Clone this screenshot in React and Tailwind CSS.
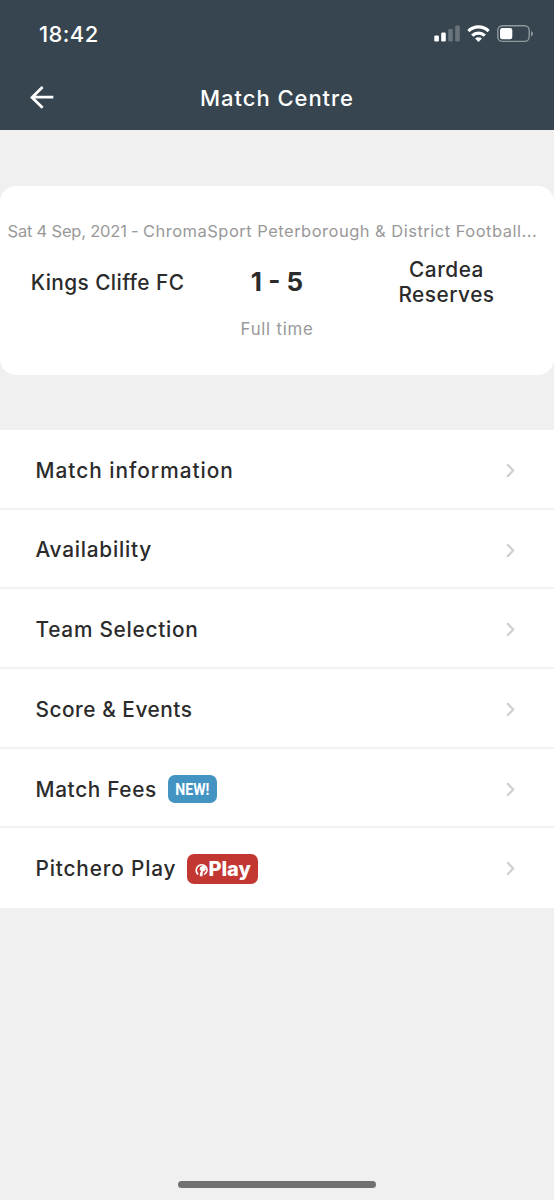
import clsx from 'clsx';

const MENU = [
    { label: 'Match information', tracking: 'tracking-[1px]' },
    { label: 'Availability', tracking: 'tracking-[0.76px]' },
    { label: 'Team Selection', tracking: 'tracking-[0.74px]' },
    { label: 'Score & Events', tracking: 'tracking-[0.54px]' },
    { label: 'Match Fees', tracking: 'tracking-[0.66px]', badge: 'new' },
    { label: 'Pitchero Play', tracking: 'tracking-[0.84px]', badge: 'play' },
];

const StatusBar = () => (
    <div className="flex h-[68px] items-center justify-between pl-[39px] pr-[20px]">
        <span className="text-[22px] font-medium leading-none tracking-[0.4px]">18:42</span>
        <div className="flex items-center">
            {/* Signal */}
            <svg width="27" height="18" viewBox="0 0 27 18" fill="#fff">
                <rect x="0.3" y="10.5" width="4.6" height="6" rx="1.2" />
                <rect x="7.2" y="7.5" width="4.6" height="9" rx="1.2" />
                <rect x="14.2" y="4" width="4.6" height="12.5" rx="1.2" opacity="0.25" />
                <rect x="21.2" y="0.5" width="4.6" height="16" rx="1.2" opacity="0.25" />
            </svg>
            {/* Wifi */}
            <svg className="ml-[6px]" width="23" height="18" viewBox="0 0 23 18" fill="none" stroke="#fff" strokeWidth="3.2">
                <path d="M1.4 6.1a14.3 14.3 0 0 1 20.2 0" />
                <path d="M5.2 10.6a9 9 0 0 1 12.6 0" />
                <path d="M11.5 17l-3.4-3.4a4.8 4.8 0 0 1 6.8 0z" fill="#fff" stroke="none" />
            </svg>
            {/* Battery */}
            <svg className="ml-[7px]" width="37" height="18" viewBox="0 0 37 18" fill="none">
                <rect x="0.8" y="0.8" width="31.4" height="15.6" rx="4.5" stroke="#fff" strokeOpacity="0.45" strokeWidth="1.4" />
                <rect x="3" y="3" width="12.3" height="11.3" rx="2.3" fill="#fff" />
                <path d="M34.2 6v5.4c1-.5 1.7-1.5 1.7-2.7s-.7-2.2-1.7-2.7z" fill="#fff" fillOpacity="0.5" />
            </svg>
        </div>
    </div>
);

const Header = () => (
    <header className="h-[130px] bg-[#36454f] text-white">
        <StatusBar />
        <div className="grid h-[60px] grid-cols-[80px_1fr_80px] items-center">
            <button className="pl-[29px]">
                <svg width="26" height="24" viewBox="0 0 26 24" fill="none" stroke="#fff" strokeWidth="2.8">
                    <path d="M24.3 11.2H3M13.6 1L3 11.4l10.6 10.4" />
                </svg>
            </button>
            <h1 className="text-center text-[22px] font-[550] tracking-[0.95px]">Match Centre</h1>
        </div>
    </header>
);

const ScoreCard = () => (
    <section className="mt-[55.5px] h-[189.5px] rounded-[16px] bg-white px-[7.5px] pt-[33px]">
        <p className="whitespace-nowrap text-[16.5px] leading-[24px] text-[#999]">
            <span className="tracking-[-0.2px]">Sat 4 Sep, 2021 - </span>
            <span className="tracking-[0.49px]">ChromaSport Peterborough &amp; District Football...</span>
        </p>
        <div className="mt-[13.5px] grid h-[52px] grid-cols-[200px_139px_200px] items-center text-center text-[#2b2b2b]">
            <span className="text-[20.8px] font-[550] leading-[25px] tracking-[0.42px]">Kings Cliffe FC</span>
            <span className="text-[26px] font-bold leading-none">1 - 5</span>
            <span className="text-[20.8px] font-[550] leading-[25px] tracking-[0.5px]">
                Cardea
                <br />
                Reserves
            </span>
        </div>
        <p className="mt-[9px] text-center text-[16.8px] leading-[24px] tracking-[0.75px] text-[#999]">Full time</p>
    </section>
);

const NewBadge = () => (
    <span className="ml-[11px] flex h-[28px] w-[49px] items-center justify-center rounded-[7px] bg-[#4393c3] pt-px font-['Roboto'] text-[16px] font-bold text-white">
        <span className="inline-block scale-x-[0.88]">NEW!</span>
    </span>
);

const PlayBadge = () => (
    <span className="ml-[11px] flex h-[30px] w-[71px] items-center rounded-[7px] bg-[#c23732] pl-[8px] text-white">
        <svg className="mt-[2px] shrink-0" width="13" height="14" viewBox="0 0 13 14">
            <path d="M3.2 11.4A5.4 5.4 0 1 1 12 7.4c-.2 2-1.3 3.3-3 4.2" fill="none" stroke="#fff" strokeWidth="1.6" />
            <path d="M5 4.3l3.2-1.8 2.2 1.6.4 2.4-1.4 1.7-1.5.2-.5 5.2-2.6-.6.3-3.3 1.2-1.7-1.6-1z" fill="#fff" />
        </svg>
        <span className="text-[20px] font-extrabold leading-none">Play</span>
    </span>
);

const MenuRow = ({ item }) => (
    <li className="flex h-[79.7px] items-center border-b-2 border-[#f2f2f2] pl-[35.5px] pr-[39px] pt-[3px] last:border-transparent">
        <span className={clsx('text-[20.8px] font-[550] text-[#2b2b2b]', item.tracking)}>{item.label}</span>
        {item.badge === 'new' && <NewBadge />}
        {item.badge === 'play' && <PlayBadge />}
        <svg className="ml-auto" width="9" height="15" viewBox="0 0 9 15" fill="none" stroke="#cfcfcf" strokeWidth="2.2">
            <path d="M1.2 1.2L7.2 7.5l-6 6.3" />
        </svg>
    </li>
);

export default function App() {
    return (
        <main className="flex h-[1200px] w-[554px] flex-col overflow-hidden bg-[#f0f0f0] font-['Inter',sans-serif]">
            <Header />
            <ScoreCard />
            <ul className="mt-[55px] h-[477.5px] overflow-hidden bg-white">
                {MENU.map((item) => (
                    <MenuRow key={item.label} item={item} />
                ))}
            </ul>
            {/* Home indicator */}
            <div className="mx-auto mb-[12px] mt-auto h-[7px] w-[198px] rounded-full bg-[#717171]" />
        </main>
    );
}
